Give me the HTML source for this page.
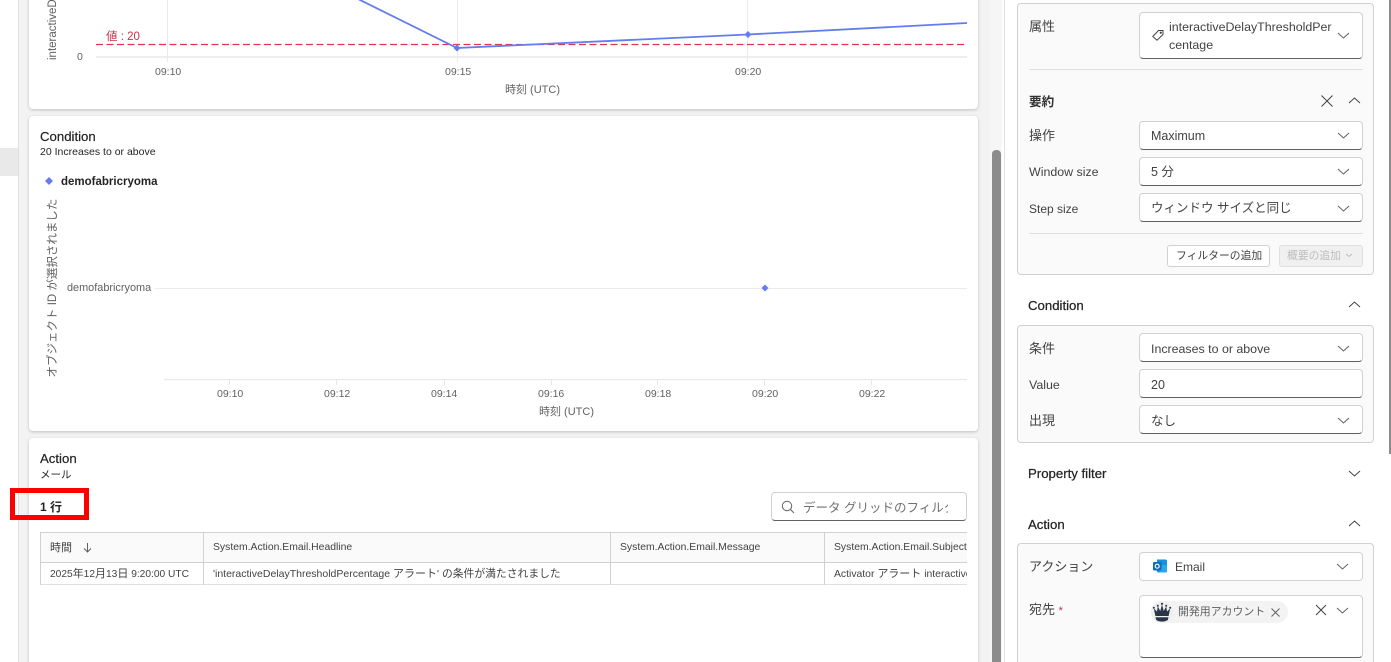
<!DOCTYPE html>
<html lang="ja">
<head>
<meta charset="utf-8">
<title>Activator</title>
<style>
html,body{margin:0;padding:0;width:1391px;height:662px;overflow:hidden;background:#fff}
body{position:relative;font-family:"Liberation Sans","Noto Sans CJK JP",sans-serif;color:#242424;font-size:12px}
.a{position:absolute}
.t{position:absolute;white-space:nowrap;line-height:16px}
.card{position:absolute;left:29px;width:949px;background:#fff;border-radius:4px;box-shadow:0 1px 3px rgba(0,0,0,.22)}
.box{position:absolute;left:1017px;width:357px;background:#fafafa;border:1px solid #d1d1d1;border-radius:4px;box-sizing:border-box}
.sel{position:absolute;left:1139px;width:224px;height:29px;background:#fff;border:1px solid #d1d1d1;border-bottom:1px solid #616161;border-radius:4px;box-sizing:border-box}
.lab{position:absolute;left:1029px;font-size:13px;color:#424242;line-height:16px;white-space:nowrap}
.val{position:absolute;left:1151px;font-size:12.500px;color:#424242;line-height:16px;white-space:nowrap}
.h{position:absolute;left:1028px;font-size:13.200px;font-weight:400;color:#242424;line-height:16px;-webkit-text-stroke:.25px #242424;white-space:nowrap}
.ax{font-size:10.500px;color:#616161}
.r{font-size:10.400px;color:#424242}
.r span{font-size:11px}
svg.i{position:absolute;overflow:visible;fill:none;stroke:#424242;stroke-width:1}
</style>
</head>
<body>
<!-- left rail -->
<div class="a" style="left:0;top:148px;width:18px;height:28px;background:#e9e9e9"></div>
<div class="a" style="left:18px;top:0;width:972px;height:662px;background:#f3f3f3;border-left:1px solid #e0e0e0;box-sizing:border-box"></div>
<!-- main scrollbar -->
<div class="a" style="left:990px;top:0;width:12px;height:662px;background:#f6f6f6"></div>
<div class="a" style="left:992px;top:150px;width:9px;height:512px;background:#8c8c8c;border-radius:4px 4px 0 0"></div>
<div class="a" style="left:1004px;top:0;width:387px;height:662px;background:#fff;border-left:1px solid #e0e0e0;box-sizing:border-box"></div>
<div class="a" style="left:1389px;top:0;width:2px;height:454px;background:#8c8c8c"></div>

<!-- card 1 -->
<div class="card" style="top:-10px;height:119px"></div>
<svg class="a" style="left:29px;top:0" width="949" height="109">
<g stroke="#ebebeb" fill="none">
<path d="M138.500 0V62M428.500 0V62M718.500 0V62"/>
</g>
<path d="M67 57H938" stroke="#e8e8e8" stroke-width="1.500"/>
<path d="M67 44.500H936" stroke="#e0354a" stroke-width="1.200" stroke-dasharray="7 3.500" fill="none"/>
<path d="M327 -2L428 48L719 34.500L938 23" stroke="#637cef" stroke-width="1.800" fill="none"/>
<path d="M428 44.500l3.500 3.500-3.500 3.500-3.500-3.500zM719 31l3.500 3.500-3.500 3.500-3.500-3.500z" fill="#637cef"/>
</svg>
<div class="a" style="left:45px;top:0;width:16px;height:60px;overflow:hidden;transform:rotate(180deg);writing-mode:vertical-rl;white-space:nowrap;font-size:11.500px;line-height:16px;color:#616161">interactiveDelayThreshold</div>
<div class="t ax" style="left:77px;top:49px">0</div>
<div class="t" style="left:106px;top:29px;font-size:11.500px;color:#c4314b">値 : 20</div>
<div class="t ax" style="left:155px;top:64px">09:10</div>
<div class="t ax" style="left:445px;top:64px">09:15</div>
<div class="t ax" style="left:735px;top:64px">09:20</div>
<div class="t" style="left:505px;top:82px;font-size:11px;color:#616161">時刻 (UTC)</div>

<!-- card 2 -->
<div class="card" style="top:116px;height:315px"></div>
<div class="t" style="left:40px;top:129px;font-size:13.200px;-webkit-text-stroke:.2px #242424">Condition</div>
<div class="t" style="left:40px;top:144px;font-size:10.500px">20 Increases to or above</div>
<svg class="a" style="left:45px;top:177px" width="8" height="8"><path d="M4 0l4 4-4 4-4-4z" fill="#637cef"/></svg>
<div class="t" style="left:61px;top:174px;font-size:11.500px;font-weight:700;color:#242424">demofabricryoma</div>
<div class="t" style="left:-37px;top:280px;width:180px;text-align:center;transform:rotate(-90deg);font-size:11.500px;color:#616161">オブジェクト ID が選択されました</div>
<div class="t" style="left:67px;top:280px;font-size:10.900px;color:#616161">demofabricryoma</div>
<svg class="a" style="left:155px;top:280px" width="815" height="120">
<path d="M0 8.500H812" stroke="#ebebeb"/>
<path d="M9 99.500H812" stroke="#e8e8e8" stroke-width="1.300"/>
<path d="M74.500 100v5M181.500 100v5M289.500 100v5M396.500 100v5M502.500 100v5M609.500 100v5M716.500 100v5" stroke="#e8e8e8"/>
<path d="M610 4.500l3.500 3.500-3.500 3.500-3.500-3.500z" fill="#637cef"/>
</svg>
<div class="t ax" style="left:217px;top:386px">09:10</div>
<div class="t ax" style="left:324px;top:386px">09:12</div>
<div class="t ax" style="left:431px;top:386px">09:14</div>
<div class="t ax" style="left:538px;top:386px">09:16</div>
<div class="t ax" style="left:645px;top:386px">09:18</div>
<div class="t ax" style="left:752px;top:386px">09:20</div>
<div class="t ax" style="left:859px;top:386px">09:22</div>
<div class="t" style="left:539px;top:404px;font-size:11px;color:#616161">時刻 (UTC)</div>

<!-- card 3 -->
<div class="card" style="top:438px;height:240px"></div>
<div class="t" style="left:40px;top:451px;font-size:13.200px;-webkit-text-stroke:.2px #242424">Action</div>
<div class="t" style="left:40px;top:467px;font-size:10.500px">メール</div>
<div class="a" style="left:10px;top:488px;width:79px;height:32px;border:5px solid #f00;box-sizing:border-box"></div>
<div class="t" style="left:40px;top:499px;font-size:12px;font-weight:700">1 行</div>
<!-- search -->
<div class="a" style="left:771px;top:492px;width:196px;height:29px;background:#fff;border:1px solid #d1d1d1;border-bottom:1px solid #616161;border-radius:4px;box-sizing:border-box"></div>
<svg class="i" style="left:781px;top:500px" width="14" height="14" stroke="#616161"><circle cx="6" cy="6" r="4.700" stroke="#616161"/><path d="M9.500 9.500L13 13" stroke="#616161"/></svg>
<div class="t" style="left:803px;top:500px;width:145px;overflow:hidden;font-size:12.500px;color:#707070">データ グリッドのフィルター</div>
<!-- table -->
<div class="a" style="left:40px;top:532px;width:927px;height:53px;overflow:hidden;background:#fff">
<div class="a" style="left:0;top:0;width:927px;height:31px;background:#fafafa"></div>
<div class="a" style="left:0;top:0;width:927px;height:1px;background:#d1d1d1"></div>
<div class="a" style="left:0;top:30px;width:927px;height:1px;background:#d1d1d1"></div>
<div class="a" style="left:0;top:52px;width:927px;height:1px;background:#e0e0e0"></div>
<div class="a" style="left:0;top:0;width:1px;height:53px;background:#d1d1d1"></div>
<div class="a" style="left:163px;top:0;width:1px;height:53px;background:#d1d1d1"></div>
<div class="a" style="left:570px;top:0;width:1px;height:53px;background:#d1d1d1"></div>
<div class="a" style="left:784px;top:0;width:1px;height:53px;background:#d1d1d1"></div>
<div class="t" style="left:10px;top:8px;font-size:11px;color:#424242">時間</div>
<svg class="i" style="left:43px;top:11px" width="9" height="10" stroke="#616161"><path d="M4.500 0V9M1 5.500L4.500 9L8 5.500" stroke="#616161"/></svg>
<div class="t r" style="left:173px;top:8px">System.Action.Email.Headline</div>
<div class="t r" style="left:580px;top:8px">System.Action.Email.Message</div>
<div class="t r" style="left:794px;top:8px;width:133px;overflow:hidden">System.Action.Email.Subject</div>
<div class="t r" style="left:10px;top:34px;font-size:10.200px">2025<span>年</span>12<span>月</span>13<span>日</span> 9:20:00 UTC</div>
<div class="t r" style="left:173px;top:34px;font-size:10.500px">'interactiveDelayThresholdPercentage <span>アラート</span>' <span style="font-size:10.800px">の条件が満たされました</span></div>
<div class="t r" style="left:794px;top:34px">Activator <span>アラート</span> interactiveDelayThreshold</div>
</div>

<!-- right panel: box 1 -->
<div class="box" style="top:3px;height:272px"></div>
<div class="lab" style="top:19px">属性</div>
<div class="sel" style="top:12px;height:47px"></div>
<svg class="i" style="left:1152px;top:29px" width="12" height="12" stroke-width=".9"><path d="M.8 7.500L6.500 1.500H11V5.500L5 11.200Z"/><circle cx="8.800" cy="3.700" r=".6"/></svg>
<div class="t" style="left:1169px;top:18px;font-size:12.400px;line-height:18px;color:#424242">interactiveDelayThresholdPer<br>centage</div>
<div class="a" style="left:1029px;top:69px;width:334px;height:1px;background:#e0e0e0"></div>
<div class="t" style="left:1029px;top:94px;font-size:12.600px;font-weight:700;color:#333">要約</div>
<svg class="i" style="left:1321px;top:95px" width="12" height="12"><path d="M.5 .5L11.500 11.500M11.500 .5L.5 11.500"/></svg>
<div class="lab" style="top:128px">操作</div>
<div class="lab" style="top:164px;font-size:12.400px">Window size</div>
<div class="lab" style="top:201px;font-size:12px">Step size</div>
<div class="sel" style="top:121px"></div><div class="val" style="top:128px">Maximum</div>
<div class="sel" style="top:157px"></div><div class="val" style="top:164px">5 分</div>
<div class="sel" style="top:193px"></div><div class="val" style="top:200px">ウィンドウ サイズと同じ</div>
<div class="a" style="left:1029px;top:233px;width:334px;height:1px;background:#e0e0e0"></div>
<div class="a" style="left:1167px;top:245px;width:103px;height:22px;background:#fff;border:1px solid #d1d1d1;border-radius:3px;box-sizing:border-box"></div>
<div class="t" style="left:1176px;top:248px;font-size:10.800px;color:#424242">フィルターの追加</div>
<div class="a" style="left:1279px;top:245px;width:84px;height:22px;background:#f0f0f0;border:1px solid #e0e0e0;border-radius:3px;box-sizing:border-box"></div>
<div class="t" style="left:1287px;top:248px;font-size:10.800px;color:#bdbdbd">概要の追加</div>

<!-- condition -->
<div class="h" style="top:298px">Condition</div>
<div class="box" style="top:325px;height:118px"></div>
<div class="lab" style="top:341px">条件</div>
<div class="lab" style="top:377px;font-size:12.400px">Value</div>
<div class="lab" style="top:413px">出現</div>
<div class="sel" style="top:333px"></div><div class="val" style="top:341px;font-size:12.400px">Increases to or above</div>
<div class="sel" style="top:369px"></div><div class="val" style="top:377px">20</div>
<div class="sel" style="top:405px"></div><div class="val" style="top:413px">なし</div>

<div class="h" style="top:466px">Property filter</div>
<div class="h" style="top:517px">Action</div>

<div class="box" style="top:543px;height:130px"></div>
<div class="lab" style="top:559px">アクション</div>
<div class="lab" style="top:602px">宛先 <span style="color:#c4314b;font-size:11px">*</span></div>
<div class="sel" style="top:552px;border-bottom-color:#d1d1d1"></div>
<svg class="a" style="left:1153px;top:559px" width="15" height="15">
<path d="M4 0.500h8.500a1.500 1.500 0 0 1 1.500 1.500v10a1.500 1.500 0 0 1-1.500 1.500H5.500A1.500 1.500 0 0 1 4 12z" fill="#1490df"/>
<path d="M9 6h5v6a1.500 1.500 0 0 1-1.500 1.500H6z" fill="#28a8ea"/>
<rect x="0" y="3" width="8.500" height="8.500" rx="1.200" fill="#0f6cbd"/>
<circle cx="4.200" cy="7.200" r="2" fill="none" stroke="#fff" stroke-width="1.100"/>
</svg>
<div class="t" style="left:1175px;top:559px;font-size:12px;color:#424242">Email</div>
<div class="sel" style="top:595px;height:63px"></div>
<div class="a" style="left:1151px;top:601px;width:137px;height:22px;background:#f3f3f3;border-radius:11px"></div>
<svg class="a" style="left:1151px;top:601px" width="22" height="22">
<circle cx="11" cy="11" r="11" fill="#efefef"/>
<g fill="#2a3647">
<circle cx="2.800" cy="6.800" r="1"/><circle cx="6.800" cy="4.800" r="1"/><circle cx="11" cy="2.800" r="1.100"/><circle cx="15.200" cy="4.800" r="1"/><circle cx="19.200" cy="6.800" r="1"/>
<path d="M2.800 7.500l3.200 3 .8-5 2.500 4.500L11 3.500l1.700 6.500 2.500-4.500.8 5 3.200-3-1.600 7.500H4.400z"/>
<path d="M4.500 16.200h13l-.7 2.800a11 11 0 0 1-11.600 0z"/>
</g>
</svg>
<div class="t" style="left:1178px;top:604px;font-size:10.900px;color:#616161">開発用アカウント</div>
<svg class="i" style="left:1271px;top:608px" width="9" height="9" stroke="#616161"><path d="M.5 .5L8.500 8.500M8.500 .5L.5 8.500" stroke="#616161"/></svg>
<svg class="i" style="left:1316px;top:605px" width="10" height="10"><path d="M0 0L10 10M10 0L0 10"/></svg>

<!-- chevrons -->
<svg class="a" style="left:1004px;top:0;overflow:visible" width="387" height="662" fill="none" stroke="#616161" stroke-width="1">
<path d="M334 33l5.500 5 5.500-5M334 133l5.500 5 5.500-5M334 169l5.500 5 5.500-5M334 206l5.500 5 5.500-5M334 346l5.500 5 5.500-5M334 418l5.500 5 5.500-5M333 564l5.500 5 5.500-5M333 608l5.500 5 5.500-5"/>
<path d="M345 103l5.500-5 5.500 5M345 307l5.500-5 5.500 5M345 526l5.500-5 5.500 5M345 471l5.500 5 5.500-5" stroke="#424242"/>
<path d="M342 254l3 2.500 3-2.500" stroke="#bdbdbd"/>
</svg>
</body>
</html>
